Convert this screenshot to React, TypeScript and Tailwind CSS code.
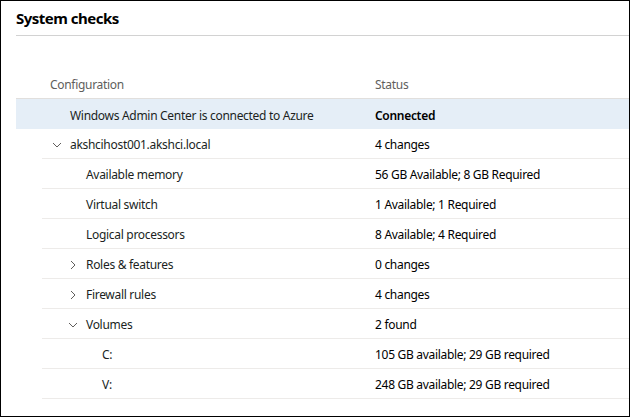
import React from "react";

type Row = {
  name: string;
  status: string;
  level: number;
  chevron?: "down" | "right";
  bold?: boolean;
  selected?: boolean;
};

const rows: Row[] = [
  { name: "Windows Admin Center is connected to Azure", status: "Connected", level: 0, bold: true, selected: true },
  { name: "akshcihost001.akshci.local", status: "4 changes", level: 0, chevron: "down" },
  { name: "Available memory", status: "56 GB Available; 8 GB Required", level: 1 },
  { name: "Virtual switch", status: "1 Available; 1 Required", level: 1 },
  { name: "Logical processors", status: "8 Available; 4 Required", level: 1 },
  { name: "Roles & features", status: "0 changes", level: 1, chevron: "right" },
  { name: "Firewall rules", status: "4 changes", level: 1, chevron: "right" },
  { name: "Volumes", status: "2 found", level: 1, chevron: "down" },
  { name: "C:", status: "105 GB available; 29 GB required", level: 2 },
  { name: "V:", status: "248 GB available; 29 GB required", level: 2 },
];

function Chevron({ dir }: { dir: "down" | "right" }) {
  return (
    <svg width="10" height="10" viewBox="0 0 10 10" className="text-[#605e5c]">
      {dir === "down" ? (
        <path d="M1 3 L5 7 L9 3" fill="none" stroke="currentColor" strokeWidth="1" />
      ) : (
        <path d="M3 1 L7 5 L3 9" fill="none" stroke="currentColor" strokeWidth="1" />
      )}
    </svg>
  );
}

export default function App() {
  return (
    <div className="w-[630px] h-[417px] bg-white border border-black overflow-hidden font-['Noto_Sans',sans-serif]">
      <div className="ml-[15px]">
        <div className="h-[35px] flex items-center border-b border-[#d2d2d2]">
          <h1 className="text-[15px] font-bold text-black tracking-[-0.5px] leading-none">System checks</h1>
        </div>
        <div className="h-[63px] flex items-end border-b border-[#e1dfdd] text-[12px] tracking-[-0.3px] text-[#605e5c]">
          <div className="pl-[34px] w-[359px] h-[30px] flex items-center pt-[3px]">Configuration</div>
          <div className="h-[30px] flex items-center pt-[3px]">Status</div>
        </div>
        {rows.map((r, i) => (
          <div
            key={i}
            className={
              r.selected
                ? "h-[30px] flex items-center bg-[#e5eef7] text-[12px] tracking-[-0.3px] pt-[3px]"
                : "h-[30px] flex items-center ml-[26px] border-b border-[#edebe9] text-[12px] tracking-[-0.3px] pt-[3px]"
            }
          >
            <div
              className={
                r.selected
                  ? "w-[359px] flex items-center pl-[54px] text-[#201f1e]"
                  : r.level === 0
                  ? "w-[333px] flex items-center pl-[10px] text-[#201f1e]"
                  : r.level === 1
                  ? "w-[333px] flex items-center pl-[26px] text-[#201f1e]"
                  : "w-[333px] flex items-center pl-[60px] text-[#201f1e]"
              }
            >
              {r.chevron ? (
                <span className="w-[18px] flex items-center">
                  <Chevron dir={r.chevron} />
                </span>
              ) : r.level === 0 && !r.selected ? (
                <span className="w-[18px]" />
              ) : r.level === 1 ? (
                <span className="w-[18px]" />
              ) : null}
              <span>{r.name}</span>
            </div>
            <div className={r.bold ? "font-semibold text-black" : "text-black"}>{r.status}</div>
          </div>
        ))}
      </div>
    </div>
  );
}
